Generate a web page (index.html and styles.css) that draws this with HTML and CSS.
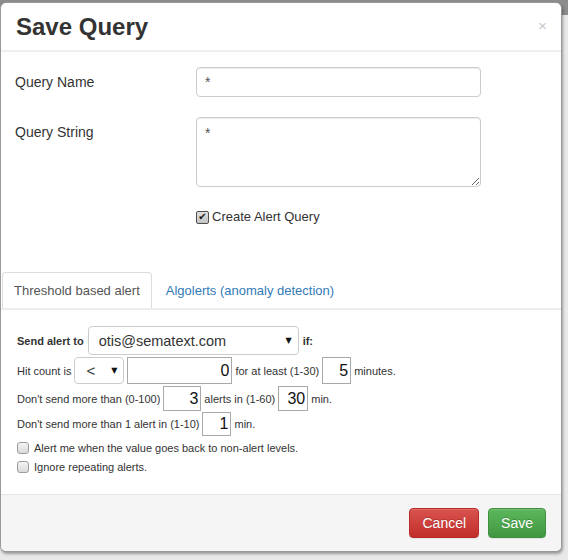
FILE: index.html
```html
<!DOCTYPE html>
<html>
<head>
<meta charset="utf-8">
<title>Save Query</title>
<link rel="stylesheet" href="styles.css">
</head>
<body>
<div class="modal">
  <div class="modal-header">
    <h4 class="title">Save Query</h4>
    <span class="close">×</span>
  </div>
  <div class="modal-body">
    <div class="form-row">
      <label class="flabel">Query Name</label>
      <input class="field" type="text" value="*">
    </div>
    <div class="form-row">
      <label class="flabel">Query String</label>
      <textarea class="field area">*</textarea>
    </div>
    <div class="form-row check-row">
      <span></span>
      <label class="check"><span class="cb cb-on">✔</span>Create Alert Query</label>
    </div>
  </div>
  <ul class="tabs">
    <li class="tab active">Threshold based alert</li>
    <li class="tab link">Algolerts (anomaly detection)</li>
  </ul>
  <div class="tab-content">
    <div class="arow r1">
      <b>Send alert to</b>
      <div class="sel sel-email"><span>otis@sematext.com</span><span class="caret">▼</span></div>
      <b>if:</b>
    </div>
    <div class="arow r2">
      <span>Hit count is</span>
      <div class="sel sel-op"><span>&lt;</span><span class="caret">▼</span></div>
      <input class="num w105" type="text" value="0">
      <span>for at least (1-30)</span>
      <input class="num w29" type="text" value="5">
      <span>minutes.</span>
    </div>
    <div class="arow r3">
      <span>Don't send more than (0-100)</span>
      <input class="num w38" type="text" value="3">
      <span>alerts in (1-60)</span>
      <input class="num w30" type="text" value="30">
      <span>min.</span>
    </div>
    <div class="arow r4">
      <span>Don't send more than 1 alert in (1-10)</span>
      <input class="num w29" type="text" value="1">
      <span>min.</span>
    </div>
    <div class="arow r5">
      <span class="cb cb-off"></span>
      <span>Alert me when the value goes back to non-alert levels.</span>
    </div>
    <div class="arow r6">
      <span class="cb cb-off"></span>
      <span>Ignore repeating alerts.</span>
    </div>
  </div>
  <div class="modal-footer">
    <button class="btn btn-danger">Cancel</button>
    <button class="btn btn-success">Save</button>
  </div>
</div>
</body>
</html>
```
FILE: styles.css
```css
* { box-sizing: border-box; }

html, body { height: 100%; }

body {
  margin: 0;
  padding-top: 2px;
  overflow: hidden;
  font-family: "Liberation Sans", Arial, sans-serif;
  color: #333;
  background: linear-gradient(#8c8c8c 0, #8c8c8c 15px, #e9e9e9 15px);
}

.modal {
  width: 562px;
  background: #fff;
  border: 1px solid rgba(0, 0, 0, 0.4);
  border-radius: 6px;
  box-shadow: 1px 2px 3px rgba(0, 0, 0, 0.35);
  overflow: hidden;
}

.modal-header {
  display: flex;
  align-items: center;
  padding: 11px 14px 10px 15px;
  border-bottom: 2px solid #efefef;
}

.title {
  flex: 1;
  margin: 0;
  font-size: 24px;
  line-height: 26px;
  font-weight: bold;
  color: #333;
}

.close {
  font-size: 15px;
  line-height: 1;
  color: #c8c8c8;
  margin-top: -3px;
}

.modal-body {
  padding: 15px 15px 46px 14px;
}

.form-row {
  display: grid;
  grid-template-columns: 181px 285px;
  align-items: start;
}

.form-row + .form-row { margin-top: 20px; }
.form-row.check-row { margin-top: 21px; }

.flabel {
  font-size: 14px;
  line-height: 20px;
  padding-top: 5px;
}

.field {
  width: 285px;
  height: 30px;
  margin: 0;
  border: 1px solid #ccc;
  border-radius: 4px;
  padding: 6px 8px;
  font: 14px "Liberation Sans", Arial, sans-serif;
  color: #555;
  box-shadow: inset 0 1px 1px rgba(0, 0, 0, 0.075);
}

.area {
  display: block;
  height: 70px;
  resize: vertical;
  padding-top: 7px;
}

.check {
  display: flex;
  align-items: center;
  gap: 3px;
  font-size: 13px;
  line-height: 18px;
}

.cb {
  display: inline-flex;
  align-items: center;
  justify-content: center;
  flex: none;
}

.cb-on {
  width: 13px;
  height: 13px;
  border: 1px solid #4f4f4f;
  border-radius: 2px;
  background: linear-gradient(#dedede, #c4c4c4);
  font-family: "DejaVu Sans", sans-serif;
  font-size: 10px;
  line-height: 1;
  color: #1a1a1a;
}

.cb-off {
  width: 12px;
  height: 12px;
  border: 1px solid #9c9c9c;
  border-radius: 3px;
  background: linear-gradient(#f4f4f4, #dadada);
}

.tabs {
  display: flex;
  margin: 0;
  padding: 0 0 0 1px;
  list-style: none;
  border-bottom: 2px solid #ececec;
}

.tab {
  font-size: 13px;
  line-height: 35px;
  padding: 0 11px;
  margin-right: 2px;
  border: 1px solid transparent;
  border-bottom: 0;
  border-radius: 4px 4px 0 0;
}

.tab.active {
  border-color: #ddd;
  color: #555;
}

.tab.link { color: #337ab7; }

.tab-content {
  padding: 16px 16px 19px;
  font-size: 11px;
  line-height: 16px;
}

.arow {
  display: flex;
  align-items: center;
  gap: 3px;
}

.r1 { height: 29px; gap: 4px; }
.r2 { height: 27px; margin-top: 2px; }
.r3 { height: 25px; margin-top: 2px; }
.r4 { height: 24px; margin-top: 1px; }
.r5 { height: 16px; margin-top: 4px; gap: 5px; }
.r6 { height: 16px; margin-top: 3px; gap: 5px; }

.sel {
  display: flex;
  align-items: center;
  justify-content: space-between;
  height: 100%;
  border: 1px solid #ccc;
  border-radius: 4px;
  font-size: 14px;
  color: #333;
  background: #fff;
}

.sel-email { width: 211px; padding: 0 6px 0 10px; font-size: 14.5px; }
.sel-op { width: 50px; padding: 0 6px 0 11px; font-size: 15px; }

.caret {
  font-family: "DejaVu Sans", sans-serif;
  font-size: 8px;
  color: #111;
}

.num {
  height: 100%;
  margin: 0;
  border: 1px solid #a9a9a9;
  border-radius: 0;
  padding: 0 2px;
  font: 16px "Liberation Sans", Arial, sans-serif;
  color: #111;
  text-align: right;
  background: #fff;
}

.w105 { width: 105px; }
.w38 { width: 38px; }
.w30 { width: 30px; }
.w29 { width: 29px; }

.modal-footer {
  display: flex;
  justify-content: flex-end;
  gap: 9px;
  padding: 13px 15px;
  border-top: 1px solid #e5e5e5;
  background: #f5f5f5;
}

.btn {
  height: 30px;
  padding: 0 12px;
  font: 14px "Liberation Sans", Arial, sans-serif;
  color: #fff;
  border: 1px solid;
  border-radius: 4px;
  text-shadow: 0 -1px 0 rgba(0, 0, 0, 0.2);
  box-shadow: inset 0 1px 0 rgba(255, 255, 255, 0.15), 0 1px 1px rgba(0, 0, 0, 0.075);
}

.btn-danger {
  background-image: linear-gradient(#d9534f, #c12e2a);
  border-color: #b92c28;
}

.btn-success {
  background-image: linear-gradient(#5cb85c, #419641);
  border-color: #3e8f3e;
}
```
